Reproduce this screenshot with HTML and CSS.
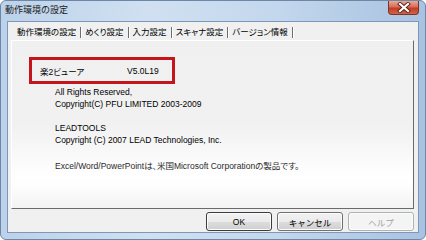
FILE: index.html
```html
<!DOCTYPE html>
<html>
<head>
  <title>動作環境の設定</title>
  <link rel="stylesheet" href="styles.css">
</head>
<body>
  <div class="window">
    <div class="titlebar">
      <span class="title">動作環境の設定</span>
      <div class="close-button">
        <svg width="14" height="11" viewBox="0 0 14 11">
          <path d="M3 2 L11 9 M11 2 L3 9" stroke="#5a2418" stroke-width="4" stroke-linecap="square"/>
          <path d="M3 2 L11 9 M11 2 L3 9" stroke="#ffffff" stroke-width="2.2" stroke-linecap="square"/>
        </svg>
      </div>
    </div>

    <div class="client">
      <div class="tabs">
        <span class="tab">動作環境の設定</span>
        <span class="tab">めくり設定</span>
        <span class="tab">入力設定</span>
        <span class="tab">スキャナ設定</span>
        <span class="tab active">バージョン情報</span>
      </div>

      <div class="panel">
        <div class="product-box">
          <span class="product-name">楽2ビューア</span>
          <span class="product-version">V5.0L19</span>
        </div>

        <div class="info-block">
          <p>All Rights Reserved,</p>
          <p>Copyright(C) PFU LIMITED 2003-2009</p>
        </div>

        <div class="info-block lead-block">
          <p>LEADTOOLS</p>
          <p>Copyright (C) 2007 LEAD Technologies, Inc.</p>
        </div>

        <p class="trademark">Excel/Word/PowerPointは、米国Microsoft Corporationの製品です。</p>
      </div>

      <div class="buttons">
        <button class="dlg-button default">OK</button>
        <button class="dlg-button">キャンセル</button>
        <button class="dlg-button" disabled>ヘルプ</button>
      </div>
    </div>
  </div>
</body>
</html>
```

FILE: styles.css
```css
body {
  margin: 0;
  background-color: #ffffff;
  font-family: "Liberation Sans", "Noto Sans CJK JP", sans-serif;
  font-size: 8.5px;
  color: #000;
}

p {
  margin: 0;
}

.window {
  width: 426px;
  height: 240px;
  box-sizing: border-box;
  display: flex;
  flex-direction: column;
  border: 1px solid #6d87a6;
  border-radius: 6px 6px 6px 6px;
  background: linear-gradient(to right, #bcd2ea 0%, #d0e0f1 35%, #c3d7ed 65%, #a8c2e1 100%);
}

/* Title bar */
.titlebar {
  height: 20px;
  display: flex;
  align-items: flex-start;
  padding: 0 6px 0 4px;
}

.title {
  line-height: 19px;
  font-size: 9px;
  color: #1b1b1b;
}

.close-button {
  margin-left: auto;
  width: 31px;
  height: 14px;
  box-sizing: border-box;
  display: flex;
  align-items: center;
  justify-content: center;
  border: 1px solid #7b3426;
  border-top: none;
  border-radius: 0 0 4px 4px;
  background: linear-gradient(to bottom, #e9a999 0%, #d86e57 45%, #c43c22 55%, #d0644a 100%);
}

/* Client area */
.client {
  flex: 1;
  margin: 0 6px 6px 6px;
  display: flex;
  flex-direction: column;
  background-color: #f0f0f0;
  border: 1px solid #7f97b6;
}

.tabs {
  height: 18px;
  box-sizing: border-box;
  display: flex;
  align-items: center;
  padding: 3px 0 0 9px;
  font-feature-settings: "palt";
}

.tab {
  height: 11px;
  line-height: 11px;
  padding-right: 4px;
  margin-right: 4px;
  border-right: 1px solid #6e6e6e;
  box-shadow: 1px 0 0 #ffffff;
  white-space: nowrap;
}

/* Tab page */
.panel {
  height: 169px;
  box-sizing: border-box;
  margin: 0 4px 0 3px;
  padding: 16px 0 0 17px;
  border-style: solid;
  border-width: 1px;
  border-color: #ffffff #6a6a6a #6a6a6a #ffffff;
  background: linear-gradient(to bottom, #f0f0f0 0%, #f1f1f1 50%, #ffffff 82%, #fdfdfd 88%, #f3f3f3 100%);
}

.product-box {
  width: 146px;
  height: 27px;
  box-sizing: border-box;
  display: flex;
  align-items: center;
  padding-left: 8px;
  border: 3px solid #c4141c;
  font-feature-settings: "palt";
}

.product-name {
  width: 87px;
}

.info-block {
  margin: 2px 0 0 26px;
  line-height: 12px;
}

.lead-block {
  margin-top: 12px;
}

.trademark {
  margin: 14px 0 0 26px;
  line-height: 12px;
  color: #2a2a2a;
  font-feature-settings: "palt";
}

/* Buttons */
.buttons {
  display: flex;
  justify-content: flex-end;
  gap: 5px;
  margin-top: 3px;
  padding-right: 4px;
}

.dlg-button {
  width: 66px;
  height: 19px;
  padding: 0;
  font-family: "Liberation Sans", "Noto Sans CJK JP", sans-serif;
  font-size: 8.5px;
  color: #000;
  border: 1px solid #707070;
  border-radius: 3px;
  background: linear-gradient(to bottom, #f2f2f2 0%, #ebebeb 50%, #dddddd 51%, #cfcfcf 100%);
  box-shadow: inset 0 0 0 1px #fcfcfc;
}

.dlg-button.default {
  border-color: #3c3c3c;
}

.dlg-button:disabled {
  color: #a0a0a0;
  border-color: #adb2b5;
  background: #f4f4f4;
}
```
